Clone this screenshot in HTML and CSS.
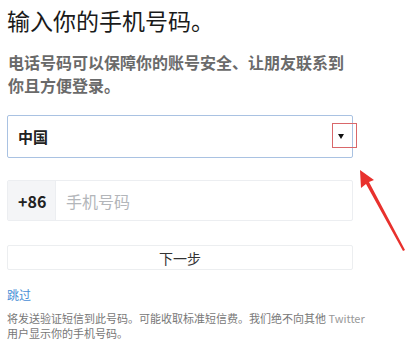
FILE: index.html
```html
<!DOCTYPE html>
<html lang="zh-CN">
<head>
    <meta charset="UTF-8">
    <meta name="viewport" content="width=device-width, initial-scale=1.0">
    <title>输入你的手机号码</title>
    <link rel="stylesheet" href="styles.css">
</head>
<body>
    <div class="page">
        <h1 class="title">输入你的手机号码。</h1>
        <p class="subtitle">电话号码可以保障你的账号安全、让朋友联系到你且方便登录。</p>

        <div class="select">
            <span class="select-value">中国</span>
            <span class="select-arrow"></span>
            <span class="mark-box"></span>
        </div>

        <div class="phone">
            <span class="phone-prefix">+86</span>
            <span class="phone-placeholder">手机号码</span>
        </div>

        <button class="next">下一步</button>

        <a class="skip" href="#">跳过</a>

        <p class="note">将发送验证短信到此号码。可能收取标准短信费。我们绝不向其他 <span class="latin">Twitter</span> 用户显示你的手机号码。</p>
    </div>

    <svg class="mark-arrow" width="412" height="346" viewBox="0 0 412 346">
        <polygon points="360,170 361,188 366,184 403,251 405,250 369,182 374,180" fill="#e8312d"/>
    </svg>
</body>
</html>
```

FILE: styles.css
```css
html, body {
    margin: 0;
    background: #fff;
}
body {
    position: relative;
    width: 412px;
    height: 346px;
    overflow: hidden;
    font-family: "Noto Sans CJK SC", "Noto Sans", sans-serif;
}
.page {
    width: 346px;
    padding: 5px 0 0 7px;
}
.title {
    margin: 0;
    font-size: 23px;
    font-weight: normal;
    line-height: 30px;
    color: #1a1a1a;
}
.subtitle {
    margin: 16px 0 0;
    padding-left: 1px;
    font-size: 16px;
    font-weight: bold;
    line-height: 23px;
    color: #6a6a6a;
}
.select {
    position: relative;
    display: flex;
    align-items: center;
    justify-content: space-between;
    box-sizing: border-box;
    height: 43px;
    margin-top: 18px;
    padding: 0 8px 0 10px;
    border: 1px solid #a9c2e2;
    border-radius: 2px;
}
.select-value {
    font-size: 15px;
    font-weight: bold;
    color: #222;
}
.select-arrow {
    width: 0;
    height: 0;
    border-left: 3px solid transparent;
    border-right: 3px solid transparent;
    border-top: 5px solid #111;
}
.mark-box {
    position: absolute;
    top: 7px;
    right: -5px;
    width: 23px;
    height: 23px;
    border: 1px solid #d9676a;
}
.phone {
    display: flex;
    align-items: stretch;
    box-sizing: border-box;
    height: 41px;
    margin-top: 22px;
    border: 1px solid #eceef1;
    border-radius: 2px;
}
.phone-prefix {
    display: flex;
    align-items: center;
    width: 37px;
    padding-left: 10px;
    background: #f4f5f7;
    border-right: 1px solid #eceef1;
    font-size: 16px;
    font-weight: bold;
    color: #222;
}
.phone-placeholder {
    display: flex;
    align-items: center;
    padding-left: 10px;
    font-size: 16px;
    color: #b3b6ba;
}
.next {
    display: block;
    box-sizing: border-box;
    width: 100%;
    height: 25px;
    margin-top: 24px;
    padding: 0;
    border: 1px solid #eceef0;
    border-radius: 2px;
    background: #fff;
    font-family: inherit;
    font-size: 14px;
    color: #333;
}
.skip {
    display: block;
    margin-top: 17px;
    font-size: 12px;
    line-height: 16px;
    color: #4a8fd6;
    text-decoration: none;
}
.note {
    margin: 8px 0 0;
    width: 370px;
    font-size: 11px;
    line-height: 15px;
    color: #777;
}
.note .latin {
    color: #999;
}
.mark-arrow {
    position: absolute;
    top: 0;
    left: 0;
    pointer-events: none;
}
```
